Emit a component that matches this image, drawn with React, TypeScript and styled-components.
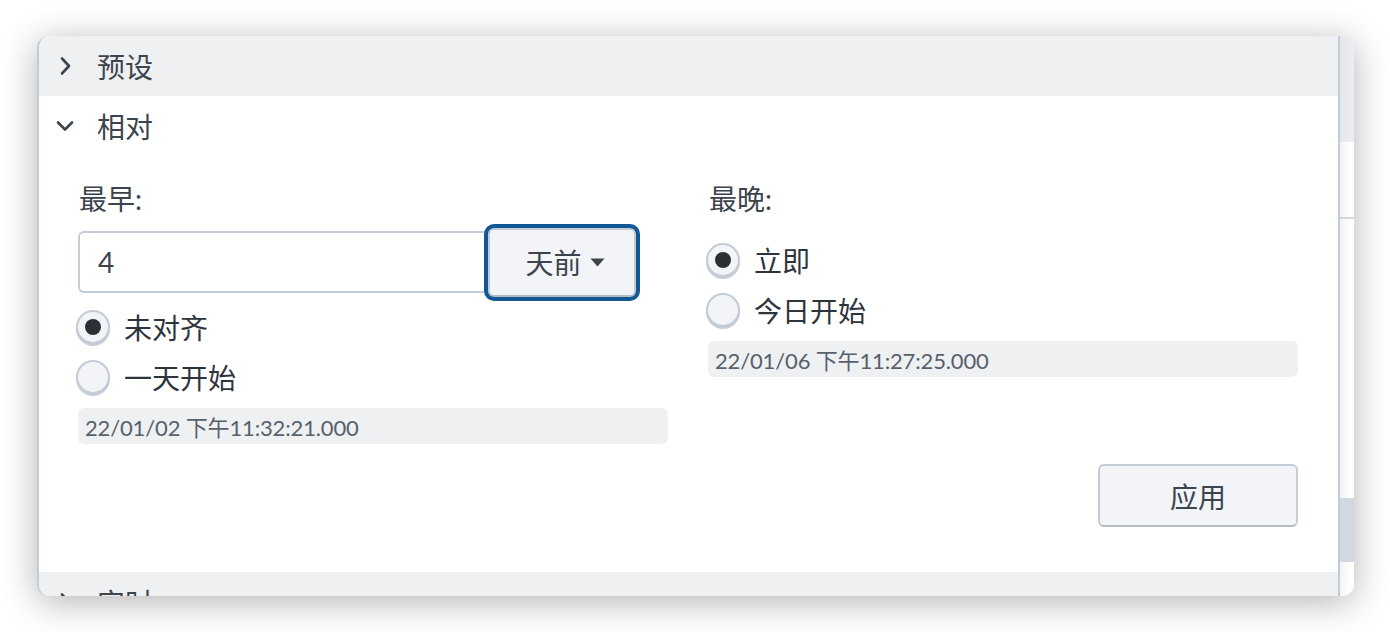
import React from "react";
import styled, { createGlobalStyle } from "styled-components";

const Global = createGlobalStyle`
  html, body { margin: 0; padding: 0; background: #ffffff; }
  body { font-family: "Lato", "Noto Sans CJK SC", sans-serif; color: #3c444d; }
  * { box-sizing: border-box; }
`;

const Page = styled.div`
  padding: 36px 0 0 37px;
  width: 1390px;
  height: 632px;
`;

const Panel = styled.div`
  width: 1317px;
  height: 560px;
  display: flex;
  border-radius: 12px;
  overflow: hidden;
  border-left: 2px solid #c3cbd6;
  background: #ffffff;
  box-shadow: 0 6px 36px rgba(0, 0, 0, 0.3);
`;

const Scroll = styled.div`
  flex: 1;
  display: flex;
  flex-direction: column;
  border-right: 2px solid #c3cbd6;
  overflow: hidden;
`;

const Strip = styled.div`
  width: 14px;
  display: flex;
  flex-direction: column;
  background: linear-gradient(90deg, #f2f3f5 0%, #ffffff 70%);
`;

const StripBlock = styled.div<{ $h: number; $bg?: string }>`
  height: ${(p) => p.$h}px;
  flex-shrink: 0;
  background: ${(p) => p.$bg ?? "transparent"};
`;

const Header = styled.div<{ $open?: boolean }>`
  height: 60px;
  flex-shrink: 0;
  display: flex;
  align-items: center;
  padding-left: 16px;
  gap: 22px;
  background: ${(p) => (p.$open ? "#ffffff" : "#eff0f2")};
  font-size: 28px;
  color: #3c444d;
`;

const Chevron = styled.svg`
  width: 20px;
  height: 20px;
  flex-shrink: 0;
`;

const Body = styled.div`
  padding: 25px 40px 45px 39px;
  display: flex;
  flex-direction: column;
`;

const Columns = styled.div`
  display: grid;
  grid-template-columns: 1fr 1fr;
  column-gap: 40px;
`;

const Column = styled.div`
  display: flex;
  flex-direction: column;
`;

const Label = styled.div<{ $mb: number }>`
  font-size: 28px;
  line-height: 36px;
  color: #3c444d;
  margin-bottom: ${(p) => p.$mb}px;
  padding-left: 1px;
`;

const InputGroup = styled.div`
  display: flex;
  align-items: center;
  width: 558px;
  height: 70px;
`;

const TextInput = styled.div`
  flex: 1;
  height: 62px;
  border: 2px solid #c3cbd6;
  border-right: none;
  border-radius: 6px 0 0 6px;
  display: flex;
  align-items: center;
  padding-left: 18px;
  font-size: 28px;
  color: #3c444d;
`;

const UnitButton = styled.div`
  width: 148px;
  height: 69px;
  border: 2px solid #c3cbd6;
  border-bottom-color: #b4bcc8;
  border-radius: 6px;
  background: #f3f4f7;
  box-shadow: 0 0 0 4px #135895;
  display: flex;
  align-items: center;
  justify-content: center;
  gap: 8px;
  font-size: 28px;
  color: #3c444d;
  padding-left: 6px;
`;

const RadioRow = styled.div<{ $mt?: number }>`
  height: 50px;
  margin-top: ${(p) => p.$mt ?? 0}px;
  display: flex;
  align-items: center;
  gap: 14px;
  font-size: 28px;
  color: #2e343b;
`;

const RadioCircle = styled.div<{ $on?: boolean }>`
  width: 34px;
  height: 34px;
  border-radius: 50%;
  border: 2px solid #c3cbd6;
  background: #f2f4f7;
  box-shadow: 0 2px 0 #c8ced8;
  display: flex;
  align-items: center;
  justify-content: center;
  margin-left: -2px;
  &::after {
    content: "";
    display: ${(p) => (p.$on ? "block" : "none")};
    width: 16px;
    height: 16px;
    border-radius: 50%;
    background: #2b3036;
  }
`;

const DateBox = styled.div`
  margin-top: 6px;
  height: 36px;
  border-radius: 6px;
  background: #eff0f2;
  display: flex;
  align-items: center;
  padding-left: 7px;
  font-size: 22px;
  color: #57616d;
  letter-spacing: -0.15px;
`;

const Footer = styled.div`
  display: flex;
  justify-content: flex-end;
  margin-top: 20px;
`;

const ApplyButton = styled.div`
  width: 200px;
  height: 63px;
  border: 2px solid #c3cbd6;
  border-bottom-color: #b4bcc8;
  border-radius: 6px;
  background: #f3f4f7;
  display: flex;
  align-items: center;
  justify-content: center;
  font-size: 28px;
  color: #3c444d;
`;

const ChevronRight = () => (
  <Chevron viewBox="0 0 20 20">
    <path d="M7 2.5 L14 10 L7 17.5" fill="none" stroke="#3c444d" strokeWidth="2.6" strokeLinecap="round" strokeLinejoin="round" />
  </Chevron>
);

const ChevronDown = () => (
  <Chevron viewBox="0 0 20 20">
    <path d="M3 6.5 L10 13.5 L17 6.5" fill="none" stroke="#3c444d" strokeWidth="2.6" strokeLinecap="round" strokeLinejoin="round" />
  </Chevron>
);

const Caret = () => (
  <svg width="15" height="9" viewBox="0 0 15 9">
    <path d="M0.5 0.5 H14.5 L7.5 8.5 Z" fill="#3c444d" />
  </svg>
);

export default function App() {
  return (
    <>
      <Global />
      <Page>
        <Panel>
          <Scroll>
            <Header>
              <ChevronRight />
              <span>预设</span>
            </Header>
            <Header $open>
              <ChevronDown />
              <span>相对</span>
            </Header>
            <Body>
              <Columns>
                <Column>
                  <Label $mb={10}>最早:</Label>
                  <InputGroup>
                    <TextInput>4</TextInput>
                    <UnitButton>
                      <span>天前</span>
                      <Caret />
                    </UnitButton>
                  </InputGroup>
                  <RadioRow $mt={5}>
                    <RadioCircle $on />
                    <span>未对齐</span>
                  </RadioRow>
                  <RadioRow>
                    <RadioCircle />
                    <span>一天开始</span>
                  </RadioRow>
                  <DateBox>22/01/02 下午11:32:21.000</DateBox>
                </Column>
                <Column>
                  <Label $mb={18}>最晚:</Label>
                  <RadioRow>
                    <RadioCircle $on />
                    <span>立即</span>
                  </RadioRow>
                  <RadioRow>
                    <RadioCircle />
                    <span>今日开始</span>
                  </RadioRow>
                  <DateBox>22/01/06 下午11:27:25.000</DateBox>
                </Column>
              </Columns>
              <Footer>
                <ApplyButton>应用</ApplyButton>
              </Footer>
            </Body>
            <Header>
              <ChevronRight />
              <span>实时</span>
            </Header>
          </Scroll>
          <Strip>
            <StripBlock $h={106} $bg="linear-gradient(90deg, #e3e6ea 0%, #eceef1 100%)" />
            <StripBlock $h={75} />
            <StripBlock $h={2} $bg="#d2d7df" />
            <StripBlock $h={279} />
            <StripBlock $h={64} $bg="#d3d8e0" />
          </Strip>
        </Panel>
      </Page>
    </>
  );
}
